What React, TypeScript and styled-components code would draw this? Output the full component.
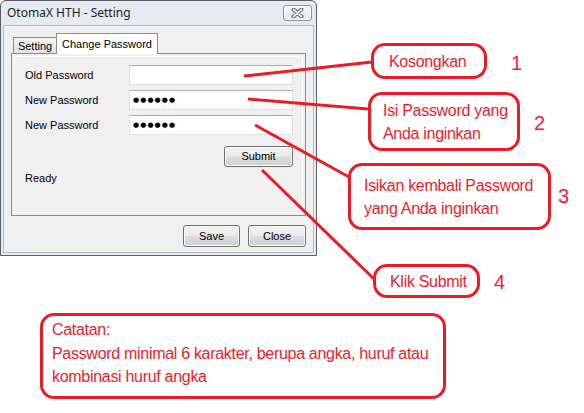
import React from "react";
import styled, { createGlobalStyle } from "styled-components";

const Global = createGlobalStyle`
  html, body { margin: 0; padding: 0; background: #fff; }
  body { font-family: "Liberation Sans", Arial, sans-serif; }
`;

const Page = styled.div`
  position: relative;
  width: 584px;
  height: 413px;
  overflow: hidden;
  background: #fff;
`;

const Window = styled.div`
  width: 317px;
  height: 256px;
  box-sizing: border-box;
  border: 1px solid #585d64;
  border-radius: 6px 6px 0 0;
  background: #e4ebf3;
  padding: 0 2px 2px;
  display: flex;
  flex-direction: column;
`;

const TitleBar = styled.div`
  height: 24px;
  flex: none;
  display: flex;
  align-items: center;
  justify-content: space-between;
  padding: 0 2px 0 4px;
  font-family: "Noto Sans", "Liberation Sans", sans-serif;
  font-size: 12px;
  color: #1e1e1e;
`;

const TitleText = styled.span`
  line-height: 16px;
`;

const CloseButton = styled.div`
  width: 29px;
  height: 16px;
  box-sizing: border-box;
  border: 1px solid #8795a6;
  border-radius: 3px;
  background: linear-gradient(#f4f7fa, #e3e9f0);
  box-shadow: inset 0 0 0 1px rgba(255, 255, 255, 0.7);
  display: flex;
  align-items: center;
  justify-content: center;
`;

const Client = styled.div`
  flex: 1;
  min-height: 0;
  border: 1px solid #b1bccb;
  background: #f0f0f0;
  padding: 7px 7px 5px 7px;
  display: flex;
  flex-direction: column;
  font-family: "Liberation Sans", Arial, sans-serif;
  font-size: 11px;
  color: #000;
`;

const TabStrip = styled.div`
  height: 20px;
  display: flex;
  align-items: flex-end;
  padding-left: 2px;
  position: relative;
  z-index: 1;
`;

const Tab = styled.div<{ $active?: boolean }>`
  box-sizing: border-box;
  border: 1px solid #898c95;
  border-bottom: none;
  display: flex;
  align-items: center;
  justify-content: center;
  height: ${(p) => (p.$active ? "21px" : "16px")};
  margin-bottom: ${(p) => (p.$active ? "-1px" : "0")};
  margin-left: ${(p) => (p.$active ? "-1px" : "0")};
  width: ${(p) => (p.$active ? "102px" : "44px")};
  padding-bottom: ${(p) => (p.$active ? "1px" : "0")};
  background: ${(p) => (p.$active ? "#fff" : "linear-gradient(#f3f3f3, #e3e3e3)")};
`;

const TabPanel = styled.div`
  height: 163px;
  box-sizing: border-box;
  border: 1px solid #898c95;
  background: #f0f0f0;
  box-shadow: inset 0 0 0 2px #f0f0f0, inset 0 0 0 3px #fff;
  padding: 11px 0 0 13px;
  display: flex;
  flex-direction: column;
  align-items: flex-start;
`;

const FieldGrid = styled.div`
  display: grid;
  grid-template-columns: 104px 164px;
  grid-auto-rows: 20px;
  row-gap: 5px;
  align-items: center;
`;

const Label = styled.span`
  line-height: 13px;
`;

const TextBox = styled.input`
  box-sizing: border-box;
  width: 164px;
  height: 20px;
  margin: 0;
  border: 1px solid #dde1e7;
  border-top-color: #abadb3;
  background: #fff;
  padding: 0 0 0 3px;
  outline: none;
  font-family: "DejaVu Sans", sans-serif;
  font-size: 7px;
  letter-spacing: 1.1px;
  color: #000;
`;

const SubmitRow = styled.div`
  width: 268px;
  margin-top: 11px;
  display: flex;
  justify-content: flex-end;
`;

const Button = styled.button<{ $w: number; $h: number }>`
  box-sizing: border-box;
  width: ${(p) => p.$w}px;
  height: ${(p) => p.$h}px;
  margin: 0;
  padding: 0;
  border: 1px solid #707070;
  border-radius: 3px;
  background: linear-gradient(#f2f2f2 0%, #ebebeb 48%, #dddddd 52%, #cfcfcf 100%);
  box-shadow: inset 0 0 0 1px #fcfcfc;
  font-family: "Liberation Sans", Arial, sans-serif;
  font-size: 11px;
  color: #000;
  line-height: 13px;
`;

const Status = styled.span`
  margin-top: 5px;
  line-height: 13px;
`;

const ButtonRow = styled.div`
  margin-top: 9px;
  display: flex;
  justify-content: flex-end;
  gap: 8px;
`;

const Callout = styled.div<{ $x: number; $y: number; $w: number; $h: number }>`
  position: absolute;
  left: ${(p) => p.$x}px;
  top: ${(p) => p.$y}px;
  width: ${(p) => p.$w}px;
  height: ${(p) => p.$h}px;
  box-sizing: border-box;
  border: 3px solid #ed1c24;
  border-radius: 14px;
  background: #fff;
  display: flex;
  align-items: center;
  font-family: "Liberation Sans", Arial, sans-serif;
  font-size: 16px;
  letter-spacing: -0.3px;
  line-height: 23px;
  color: #ef1b2b;
  white-space: nowrap;
`;

const CalloutText = styled.div<{ $pl: number }>`
  padding-left: ${(p) => p.$pl}px;
`;

const NoteBox = styled(Callout)`
  align-items: flex-start;
  padding: 2px 0 0 9px;
  line-height: 23.5px;
`;

const StepNumber = styled.span<{ $x: number; $y: number }>`
  position: absolute;
  left: ${(p) => p.$x}px;
  top: ${(p) => p.$y}px;
  font-family: "Liberation Sans", Arial, sans-serif;
  font-size: 20px;
  line-height: 20px;
  color: #ef1b3b;
`;

const Leaders = styled.svg`
  position: absolute;
  left: 0;
  top: 0;
  pointer-events: none;
`;

const lines = [
  [244, 76, 372, 62],
  [248, 99, 368, 109],
  [255, 125, 349, 177],
  [262, 170, 374, 279],
];

export default function App() {
  return (
    <Page>
      <Global />
      <Window>
        <TitleBar>
          <TitleText>OtomaX HTH - Setting</TitleText>
          <CloseButton>
            <svg width="13" height="10" viewBox="0 0 13 10">
              <path d="M2.5 1.5 L10.5 8.5 M10.5 1.5 L2.5 8.5" stroke="#5f6874" strokeWidth="4" strokeLinecap="round" />
              <path d="M2.5 1.5 L10.5 8.5 M10.5 1.5 L2.5 8.5" stroke="#f2f4f7" strokeWidth="1.8" strokeLinecap="round" />
            </svg>
          </CloseButton>
        </TitleBar>
        <Client>
          <TabStrip>
            <Tab>Setting</Tab>
            <Tab $active>Change Password</Tab>
          </TabStrip>
          <TabPanel>
            <FieldGrid>
              <Label>Old Password</Label>
              <TextBox readOnly value="" />
              <Label>New Password</Label>
              <TextBox readOnly value="●●●●●●" />
              <Label>New Password</Label>
              <TextBox readOnly value="●●●●●●" />
            </FieldGrid>
            <SubmitRow>
              <Button $w={69} $h={21}>Submit</Button>
            </SubmitRow>
            <Status>Ready</Status>
          </TabPanel>
          <ButtonRow>
            <Button $w={57} $h={22}>Save</Button>
            <Button $w={58} $h={22}>Close</Button>
          </ButtonRow>
        </Client>
      </Window>

      <Leaders width="584" height="413" viewBox="0 0 584 413">
        {lines.map(([x1, y1, x2, y2], i) => (
          <line key={i} x1={x1} y1={y1} x2={x2} y2={y2} stroke="#ed1c24" strokeWidth="3" />
        ))}
      </Leaders>

      <Callout $x={371} $y={43} $w={116} $h={36}>
        <CalloutText $pl={15}>Kosongkan</CalloutText>
      </Callout>
      <StepNumber $x={511} $y={53}>1</StepNumber>

      <Callout $x={368} $y={92} $w={152} $h={59}>
        <CalloutText $pl={12}>
          Isi Password yang
          <br />
          Anda inginkan
        </CalloutText>
      </Callout>
      <StepNumber $x={534} $y={113}>2</StepNumber>

      <Callout $x={348} $y={163} $w={203} $h={67}>
        <CalloutText $pl={13}>
          Isikan kembali Password
          <br />
          yang Anda inginkan
        </CalloutText>
      </Callout>
      <StepNumber $x={558} $y={186}>3</StepNumber>

      <Callout $x={373} $y={264} $w={107} $h={34}>
        <CalloutText $pl={14}>Klik Submit</CalloutText>
      </Callout>
      <StepNumber $x={494} $y={272}>4</StepNumber>

      <NoteBox $x={40} $y={313} $w={406} $h={86}>
        <div>
          Catatan:
          <br />
          Password minimal 6 karakter, berupa angka, huruf atau
          <br />
          kombinasi huruf angka
        </div>
      </NoteBox>
    </Page>
  );
}
